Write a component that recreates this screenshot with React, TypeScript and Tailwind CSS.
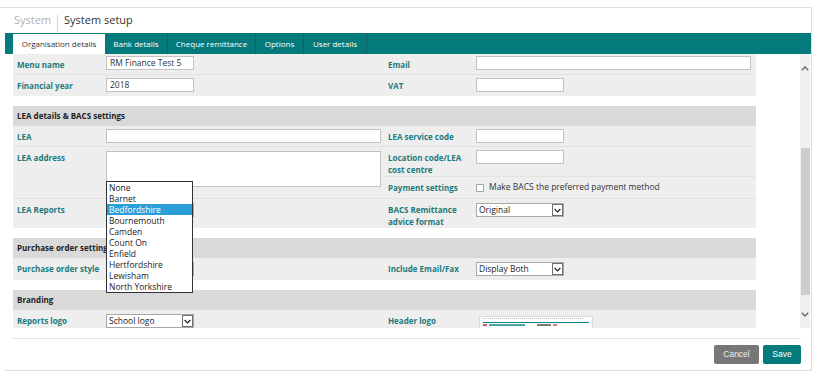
import React from "react";

function Label({ children }: { children: React.ReactNode }) {
  return (
    <div className="pl-[4px] pt-[5px] text-[8px] leading-[11.5px] font-bold text-[#1c7a7c]">
      {children}
    </div>
  );
}

function TextBox({ value, wide, mt }: { value?: string; wide?: boolean; mt?: string }) {
  return (
    <div
      className={
        (wide ? "w-[275px] " : "w-[88px] ") +
        (mt === "2" ? "mt-[2px] " : "mt-[3px] ") +
        "h-[14px] bg-white border border-[#c2c2c2] pl-[3px] text-[8.5px] leading-[12px] text-[#333]"
      }
    >
      {value}
    </div>
  );
}

function Select({ value }: { value?: string }) {
  return (
    <div className="mt-[4px] h-[14px] w-[88px] bg-white border border-[#a8a8a8] flex items-center justify-between">
      <span className="pl-[2px] text-[8.5px] text-[#222] leading-none">{value}</span>
      <div className="w-[11px] h-[12px] border border-[#707070] flex items-center justify-center">
        <svg width="7" height="5" viewBox="0 0 7 5">
          <path d="M0.6 1 L3.5 3.9 L6.4 1" fill="none" stroke="#222" strokeWidth="1.2" />
        </svg>
      </div>
    </div>
  );
}

function Chevron({ up }: { up?: boolean }) {
  return (
    <svg width="8" height="5" viewBox="0 0 8 5">
      <path
        d={up ? "M0.8 4.2 L4 1 L7.2 4.2" : "M0.8 0.8 L4 4 L7.2 0.8"}
        fill="none"
        stroke="#666"
        strokeWidth="1.3"
      />
    </svg>
  );
}

const items = [
  "None",
  "Barnet",
  "Bedfordshire",
  "Bournemouth",
  "Camden",
  "Count On",
  "Enfield",
  "Hertfordshire",
  "Lewisham",
  "North Yorkshire",
];

export default function App() {
  return (
    <div className="w-[814px] h-[376px] bg-white pt-[7px] overflow-hidden font-['Open_Sans',sans-serif]">
      <div className="w-[812px] h-[364px] border-t border-r border-[#dedede]">
        {/* Header */}
        <div className="h-[25px] flex items-center pl-[14px]">
          <span className="text-[11px] text-[#b2b2b2]">System</span>
          <div className="w-px h-[17px] bg-[#d4d4d4] mx-[6px] mt-[6px]" />
          <span className="text-[11px] text-[#333]">System setup</span>
        </div>

        <div className="ml-[5px] w-[806px] h-[338px] border-b border-[#dedede] flex flex-col">
          {/* Tabs */}
          <div className="h-[21px] bg-[#047a7c] flex pl-[8px] text-[8px] shrink-0">
            <div className="mt-[1px] h-[20px] w-[92px] bg-white text-[#333] flex items-center justify-center">
              Organisation details
            </div>
            <div className="h-[21px] w-[63px] border-r border-[#0a6466] text-white flex items-center justify-center">
              Bank details
            </div>
            <div className="h-[21px] w-[88px] border-r border-[#0a6466] text-white flex items-center justify-center">
              Cheque remittance
            </div>
            <div className="h-[21px] w-[48px] border-r border-[#0a6466] text-white flex items-center justify-center">
              Options
            </div>
            <div className="h-[21px] w-[63px] border-r border-[#0a6466] text-white flex items-center justify-center">
              User details
            </div>
          </div>

          {/* Body */}
          <div className="h-[274px] flex pl-[8px] shrink-0">
            <div className="relative w-[743px] h-[274px] overflow-hidden">
              {/* Section 1 rows */}
              <div className="grid grid-cols-[93px_278px_92px_280px] h-[21px] bg-[#eeeeee] border-b border-[#e2e2e2]">
                <Label>Menu name</Label>
                <div>
                  <TextBox value="RM Finance Test 5" mt="2" />
                </div>
                <Label>Email</Label>
                <div>
                  <TextBox wide mt="2" />
                </div>
              </div>
              <div className="grid grid-cols-[93px_278px_92px_280px] h-[21px] bg-[#eeeeee]">
                <Label>Financial year</Label>
                <div>
                  <TextBox value="2018" />
                </div>
                <Label>VAT</Label>
                <div>
                  <TextBox />
                </div>
              </div>

              <div className="h-[10px]" />
              <div className="h-[20px] bg-[#d9d9d9] pl-[4px] flex items-center text-[8px] font-bold text-[#222]">
                LEA details &amp; BACS settings
              </div>

              <div className="grid grid-cols-[93px_278px_92px_280px] h-[21px] bg-[#eeeeee] border-b border-[#e2e2e2]">
                <Label>LEA</Label>
                <div>
                  <div className="mt-[3px] h-[14px] w-[275px] bg-white border border-[#c2c2c2]" />
                </div>
                <Label>LEA service code</Label>
                <div>
                  <TextBox />
                </div>
              </div>

              <div className="grid grid-cols-[93px_278px_92px_280px] grid-rows-[30px_22px] h-[52px] bg-[#eeeeee] border-b border-[#e2e2e2]">
                <div className="row-span-2">
                  <Label>LEA address</Label>
                </div>
                <div className="row-span-2">
                  <div className="mt-[4px] h-[36px] w-[275px] bg-white border border-[#c2c2c2]" />
                </div>
                <div className="border-b border-[#e2e2e2]">
                  <Label>
                    Location code/LEA
                    <br />
                    cost centre
                  </Label>
                </div>
                <div className="border-b border-[#e2e2e2]">
                  <div className="mt-[3px]">
                    <TextBox mt="0" />
                  </div>
                </div>
                <Label>Payment settings</Label>
                <div className="flex items-center h-[21px]">
                  <div className="w-[8px] h-[8px] bg-white border border-[#a9a9a9]" />
                  <span className="ml-[5px] text-[8.5px] text-[#333]">
                    Make BACS the preferred payment method
                  </span>
                </div>
              </div>

              <div className="grid grid-cols-[93px_278px_92px_280px] h-[29px] bg-[#eeeeee]">
                <Label>LEA Reports</Label>
                <div>
                  <Select />
                </div>
                <Label>
                  BACS Remittance
                  <br />
                  advice format
                </Label>
                <div>
                  <Select value="Original" />
                </div>
              </div>

              <div className="h-[10px]" />
              <div className="h-[20px] bg-[#d9d9d9] pl-[4px] flex items-center text-[8px] font-bold text-[#222]">
                Purchase order settings
              </div>
              <div className="grid grid-cols-[93px_278px_92px_280px] h-[22px] bg-[#eeeeee]">
                <Label>Purchase order style</Label>
                <div>
                  <Select />
                </div>
                <Label>Include Email/Fax</Label>
                <div>
                  <Select value="Display Both" />
                </div>
              </div>

              <div className="h-[10px]" />
              <div className="h-[20px] bg-[#d9d9d9] pl-[4px] flex items-center text-[8px] font-bold text-[#222]">
                Branding
              </div>
              <div className="grid grid-cols-[93px_278px_92px_280px] h-[25px] bg-[#eeeeee]">
                <Label>Reports logo</Label>
                <div>
                  <Select value="School logo" />
                </div>
                <Label>Header logo</Label>
                <div>
                  <div className="ml-[3px] mt-[6px] w-[114px] h-[16px] bg-white border border-[#dcdcdc] px-[3px] pt-[1px] flex flex-col">
                    <div className="h-[1px] w-[100px] border-t border-dotted border-[#bbbbbb]" />
                    <div className="mt-[3px] h-[1px] bg-[#0b8486]" />
                    <div className="mt-[1px] flex items-center gap-[2px]">
                      <div className="h-[2px] w-[4px] bg-[#c55]" />
                      <div className="h-[2px] w-[36px] bg-[#4aa5a6]" />
                      <div className="ml-[10px] h-[2px] w-[14px] bg-[#777]" />
                      <div className="h-[2px] w-[4px] bg-[#d77]" />
                    </div>
                  </div>
                </div>
              </div>

              {/* Dropdown popup */}
              <div className="absolute left-[93px] top-[127px] w-[87px] h-[112px] bg-white border border-[#333] z-10">
                {items.map((it) => (
                  <div
                    key={it}
                    className={
                      it === "Bedfordshire"
                        ? "h-[11px] leading-[11px] pl-[2px] text-[8.5px] bg-[#2b9ed8] text-white"
                        : "h-[11px] leading-[11px] pl-[2px] text-[8.5px] text-[#222]"
                    }
                  >
                    {it}
                  </div>
                ))}
              </div>
            </div>

            {/* Scrollbar */}
            <div className="ml-[44px] w-[10px] h-[274px] bg-[#f0f0f0] flex flex-col items-center">
              <div className="mt-[12px] h-[5px] flex items-center">
                <Chevron up />
              </div>
              <div className="mt-[77px] w-[9px] h-[147px] bg-[#cdcdcd]" />
              <div className="mt-[17px] h-[5px] flex items-center">
                <Chevron />
              </div>
            </div>
          </div>

          {/* Footer */}
          <div className="h-[42px] pt-[10px] pl-[8px] shrink-0">
            <div className="w-[788px] border-t border-[#e2e2e2] flex justify-end gap-[4px] pt-[6px]">
              <div className="w-[45px] h-[19px] bg-[#777777] rounded-[2px] text-[#eeeeee] text-[8.5px] flex items-center justify-center font-['Liberation_Sans',sans-serif]">
                Cancel
              </div>
              <div className="w-[38px] h-[19px] bg-[#047a7c] rounded-[2px] text-white text-[8.5px] flex items-center justify-center font-['Liberation_Sans',sans-serif]">
                Save
              </div>
            </div>
          </div>
        </div>
      </div>
    </div>
  );
}
